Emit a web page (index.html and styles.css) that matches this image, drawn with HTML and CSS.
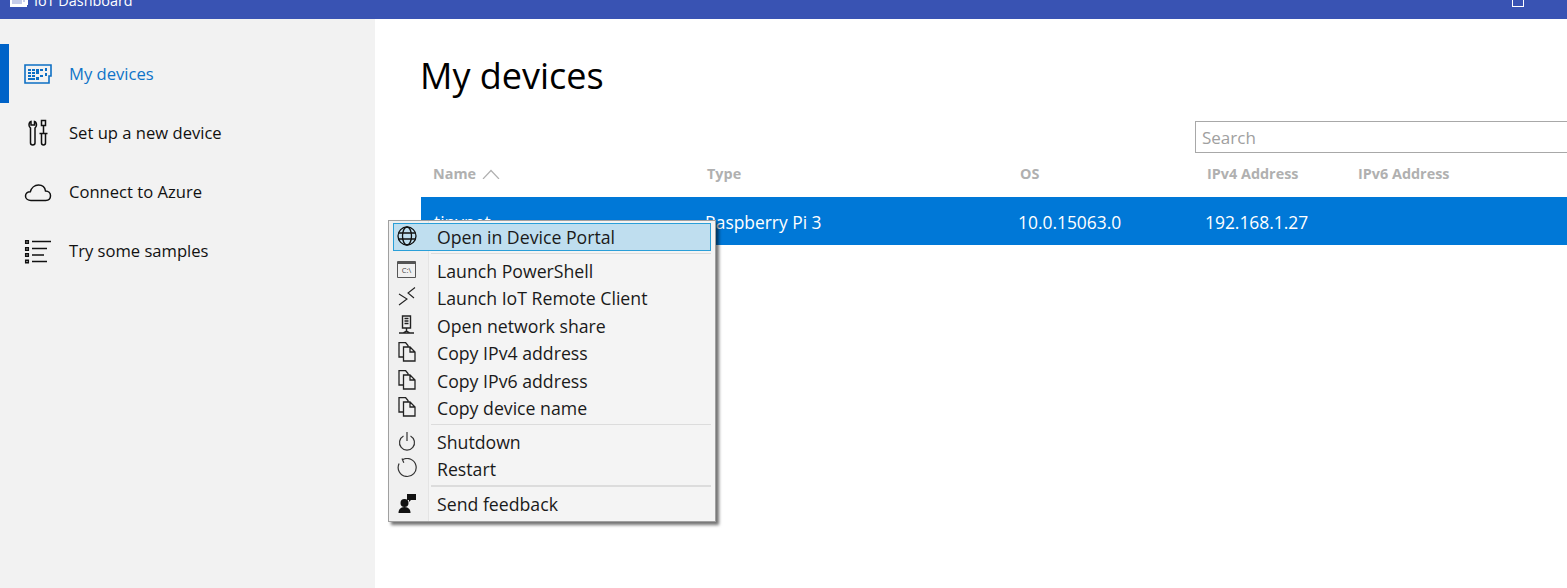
FILE: index.html
```html
<!DOCTYPE html>
<html lang="en">
  <head>
    <meta charset="utf-8">
    <title>IoT Dashboard</title>
    <link rel="stylesheet" href="styles.css">
  </head>
  <body>
    <header class="titlebar">
      <svg class="app-icon" width="18" height="7" viewBox="0 0 18 7">
        <path d="M0 0h18v5h-1v2H0z" fill="#fff"/>
        <path d="M3 0v4M5 0v4M7 0v4M9 0v4M11 0v4M14 0v2" stroke="#8d9bd4" stroke-width="1"/>
      </svg>
      <span class="app-title">IoT Dashboard</span>
      <span class="maximize"></span>
    </header>

    <div class="app">
      <nav class="sidebar">
        <a class="nav-item active">
          <svg class="nav-icon" width="28" height="20" viewBox="0 0 28 20" fill="none" stroke="#0d6fc4">
            <path d="M1 1h26v11h-2v7H1z" stroke-width="1.6"/>
            <path d="M4 5h3v2H4zM8 5h3v2H8zM4 8h3v2H4zM8 8h3v2H8zM4 11h3v2H4zM8 11h3v2H8zM4 14h7v2H4z" fill="#0d6fc4" stroke="none"/>
            <path d="M12 5h3v5h-3zM16 5h3v2h-3zM16 11h3v2h-3zM12 13h3v3h-3z" fill="#0d6fc4" stroke="none"/>
            <path d="M22 4v3M22 9v3" stroke-width="2"/>
          </svg>
          <span>My devices</span>
        </a>
        <a class="nav-item">
          <svg class="nav-icon" width="28" height="28" viewBox="0 0 28 28" fill="none" stroke="#111" stroke-width="1.5">
            <path d="M7 2.500C5.500 3 5 4.500 5 6c0 1.500 1 2.500 1.500 3v15c0 2.500 4.500 2.500 4.500 0V9c.5-.5 1.500-1.500 1.500-3 0-1.500-.5-3-2-3.500V6H7z"/>
            <path d="M17.500 1.500h4v5h-4zM19.500 6.500v8M15.500 14.500h8M17.500 14.500V24c0 2.500 4 2.500 4 0v-9.500"/>
          </svg>
          <span>Set up a new device</span>
        </a>
        <a class="nav-item">
          <svg class="nav-icon" width="28" height="20" viewBox="0 0 28 20" fill="none" stroke="#111" stroke-width="1.5">
            <path d="M7 18.500c-3 0-5.500-1.800-5.500-4.500 0-2.600 2.200-4.300 4.800-4.300C7.300 6 10.500 3 14.500 3c3.800 0 6.500 2.500 7 6 2.900 0 5 2 5 4.800 0 2.800-2 4.700-4.800 4.700z"/>
          </svg>
          <span>Connect to Azure</span>
        </a>
        <a class="nav-item">
          <svg class="nav-icon" width="28" height="26" viewBox="0 0 28 26" fill="none" stroke="#111" stroke-width="1.5">
            <path d="M1.700 2.700h2.600v2.600H1.700zM1.700 9.700h2.600v2.600H1.700zM1.700 15.700h2.600v2.600H1.700zM1.700 22.200h2.600v2.600H1.700z"/>
            <path d="M8 3.500h19M8 10.500h15M8 17h12M8 23.500h15"/>
          </svg>
          <span>Try some samples</span>
        </a>
      </nav>

      <main class="content">
        <h1 class="page-title">My devices</h1>
        <div class="search-row">
          <div class="search">Search</div>
        </div>
        <div class="device-head">
          <div class="name-head">Name
            <svg width="18" height="10" viewBox="0 0 18 10" fill="none" stroke="#b0b0b0" stroke-width="1.200"><path d="M1 10l8-8.500 8 8.500"/></svg>
          </div>
          <div>Type</div>
          <div>OS</div>
          <div>IPv4 Address</div>
          <div>IPv6 Address</div>
        </div>
        <div class="device-row">
          <div class="device-name">tinynet</div>
          <div>Raspberry Pi 3</div>
          <div>10.0.15063.0</div>
          <div>192.168.1.27</div>
          <div></div>
        </div>
      </main>
    </div>

    <div class="menu">
      <div class="menu-item current">
        <span class="menu-icon">
          <svg width="20" height="20" viewBox="0 0 20 20" fill="none" stroke="#111" stroke-width="1.300">
            <circle cx="10" cy="10" r="9"/>
            <ellipse cx="10" cy="10" rx="4.500" ry="9"/>
            <path d="M1.500 7h17M1.500 13h17"/>
          </svg>
        </span>
        <span>Open in Device Portal</span>
      </div>
      <hr class="menu-sep">
      <div class="menu-item">
        <span class="menu-icon">
          <svg width="20" height="17" viewBox="0 0 20 17" fill="none" stroke="#555" stroke-width="1">
            <path d="M.5 .5h18v16H.5z"/>
            <path d="M.5 2h18" stroke-width="2"/>
            <text class="prompt-glyph" x="9.500" y="12">C:\</text>
          </svg>
        </span>
        <span>Launch PowerShell</span>
      </div>
      <div class="menu-item">
        <span class="menu-icon">
          <svg width="20" height="20" viewBox="0 0 20 20" fill="none" stroke="#222" stroke-width="1.100">
            <path d="M2 7l8 5-8 6M18 .5L11 6l6 5"/>
          </svg>
        </span>
        <span>Launch IoT Remote Client</span>
      </div>
      <div class="menu-item">
        <span class="menu-icon">
          <svg width="20" height="20" viewBox="0 0 20 20" fill="none" stroke="#222" stroke-width="1.400">
            <path d="M5.500 1h8v12h-8zM9.500 13v4M2 18h15M6 18l3.500-2 3.500 2"/>
            <path d="M7.500 3.500h4M7.500 6h4M7.500 8.500h4" stroke-width="1.400"/>
          </svg>
        </span>
        <span>Open network share</span>
      </div>
      <div class="menu-item">
        <span class="menu-icon">
          <svg width="20" height="20" viewBox="0 0 20 20" fill="none" stroke="#222" stroke-width="1.300">
            <path d="M6.500 15H2V.5h6.500L11 3.500V5M6.500 5H13l5 5v9H6.500zM13 5v5h5"/>
          </svg>
        </span>
        <span>Copy IPv4 address</span>
      </div>
      <div class="menu-item">
        <span class="menu-icon">
          <svg width="20" height="20" viewBox="0 0 20 20" fill="none" stroke="#222" stroke-width="1.300">
            <path d="M6.500 15H2V.5h6.500L11 3.500V5M6.500 5H13l5 5v9H6.500zM13 5v5h5"/>
          </svg>
        </span>
        <span>Copy IPv6 address</span>
      </div>
      <div class="menu-item">
        <span class="menu-icon">
          <svg width="20" height="20" viewBox="0 0 20 20" fill="none" stroke="#222" stroke-width="1.300">
            <path d="M6.500 15H2V.5h6.500L11 3.500V5M6.500 5H13l5 5v9H6.500zM13 5v5h5"/>
          </svg>
        </span>
        <span>Copy device name</span>
      </div>
      <hr class="menu-sep">
      <div class="menu-item">
        <span class="menu-icon">
          <svg width="20" height="20" viewBox="0 0 20 20" fill="none" stroke="#333" stroke-width="1.200">
            <path d="M6.500 5a7.500 7.500 0 1 0 7 0M10 1v9"/>
          </svg>
        </span>
        <span>Shutdown</span>
      </div>
      <div class="menu-item">
        <span class="menu-icon">
          <svg width="20" height="20" viewBox="0 0 20 20" fill="none" stroke="#333" stroke-width="1.200">
            <path d="M5.500 1.800a9 9 0 1 1-3.400 3.700M5 .5l1.800 4.200"/>
          </svg>
        </span>
        <span>Restart</span>
      </div>
      <hr class="menu-sep thick">
      <div class="menu-item">
        <span class="menu-icon">
          <svg width="20" height="20" viewBox="0 0 20 20" fill="#111">
            <circle cx="7.500" cy="10" r="4"/>
            <path d="M1.500 20c0-4 2.500-6 6-6s6 2 6 6z"/>
            <path d="M10 1h9v6h-5l-2 2V7h-2z"/>
          </svg>
        </span>
        <span>Send feedback</span>
      </div>
    </div>
  </body>
</html>
```

FILE: styles.css
```css
html, body {
    margin: 0;
    height: 588px;
    overflow: hidden;
    background: #fff;
}
body {
    font-family: "Open Sans", "Noto Sans", sans-serif;
    color: #111;
}

.titlebar {
    height: 19px;
    background: #3953b3;
    color: #fff;
    display: flex;
    align-items: flex-end;
    overflow: hidden;
    padding-left: 10px;
}
.app-icon {
    align-self: flex-start;
}
.app-title {
    font-size: 14.400px;
    line-height: 20px;
    margin-left: 6px;
    margin-bottom: 8px;
}
.maximize {
    width: 10px;
    height: 14px;
    border: 1px solid #fff;
    margin-left: auto;
    margin-right: 43px;
    margin-bottom: 12px;
}

.app {
    display: flex;
    height: 569px;
}
.sidebar {
    width: 375px;
    flex: none;
    background: #f2f2f2;
    padding-top: 25px;
    box-sizing: border-box;
}
.nav-item {
    height: 59px;
    display: flex;
    align-items: center;
    font-size: 16.600px;
    padding-left: 24px;
}
.nav-item.active {
    color: #0f74c8;
    box-shadow: inset 9px 0 0 #0063c8;
}
.nav-icon {
    width: 28px;
    margin-right: 17px;
    flex: none;
}

.content {
    flex: 1;
    min-width: 0;
    padding-left: 46px;
}
.page-title {
    margin: 0 0 0 -1px;
    padding-top: 30px;
    font-size: 36px;
    font-weight: 400;
    line-height: 54px;
    color: #000;
}
.search-row {
    padding: 18px 0 0 774px;
    overflow: hidden;
}
.search {
    width: 500px;
    height: 30px;
    border: 1px solid #a8a8a8;
    color: #a0a0a0;
    font-size: 17px;
    line-height: 32px;
    padding-left: 6px;
}
.device-head, .device-row {
    display: grid;
    grid-template-columns: 274px 313px 187px 151px 1fr;
    align-items: center;
}
.device-head {
    height: 44px;
    padding: 0 0 3px 12px;
    box-sizing: border-box;
    font-size: 14.400px;
    font-weight: 700;
    color: #b0b0b0;
}
.name-head {
    display: flex;
    align-items: center;
    gap: 6px;
}
.device-row {
    height: 48px;
    box-sizing: border-box;
    padding: 2px 0 0 12px;
    background: #0078d7;
    color: #fff;
    font-size: 17.400px;
}
.device-row > div {
    margin-left: -2px;
}
.device-row > .device-name {
    margin-left: 1px;
}

.menu {
    position: absolute;
    left: 388px;
    top: 220px;
    width: 326px;
    height: 298px;
    border: 1px solid #a0a0a0;
    background: linear-gradient(to right, #f0f0f0 39px, #e4e4e4 39px, #e4e4e4 40px, #f4f4f4 40px);
    box-shadow: 3px 3px 3px rgba(0, 0, 0, .55);
    padding-top: 2px;
    font-size: 17.700px;
    color: #1a1a1a;
}
.menu-item {
    height: 27.500px;
    display: flex;
    align-items: center;
    margin: 0 4px;
    padding-left: 1px;
}
.menu-item.current {
    height: 26px;
    padding-left: 0;
    border: 1px solid #2a9fd8;
    background: #bfdeef;
}
.menu-icon {
    width: 43px;
    flex: none;
    display: flex;
    margin-top: -2px;
    padding-left: 3px;
    box-sizing: border-box;
}
.prompt-glyph {
    font-size: 7.500px;
    fill: #444;
    stroke: none;
    text-anchor: middle;
}
.menu-sep {
    border: 0;
    height: 1px;
    background: #dcdcdc;
    margin: 2px 4px 3px 42px;
}
.menu-sep.thick {
    height: 2px;
}
```
